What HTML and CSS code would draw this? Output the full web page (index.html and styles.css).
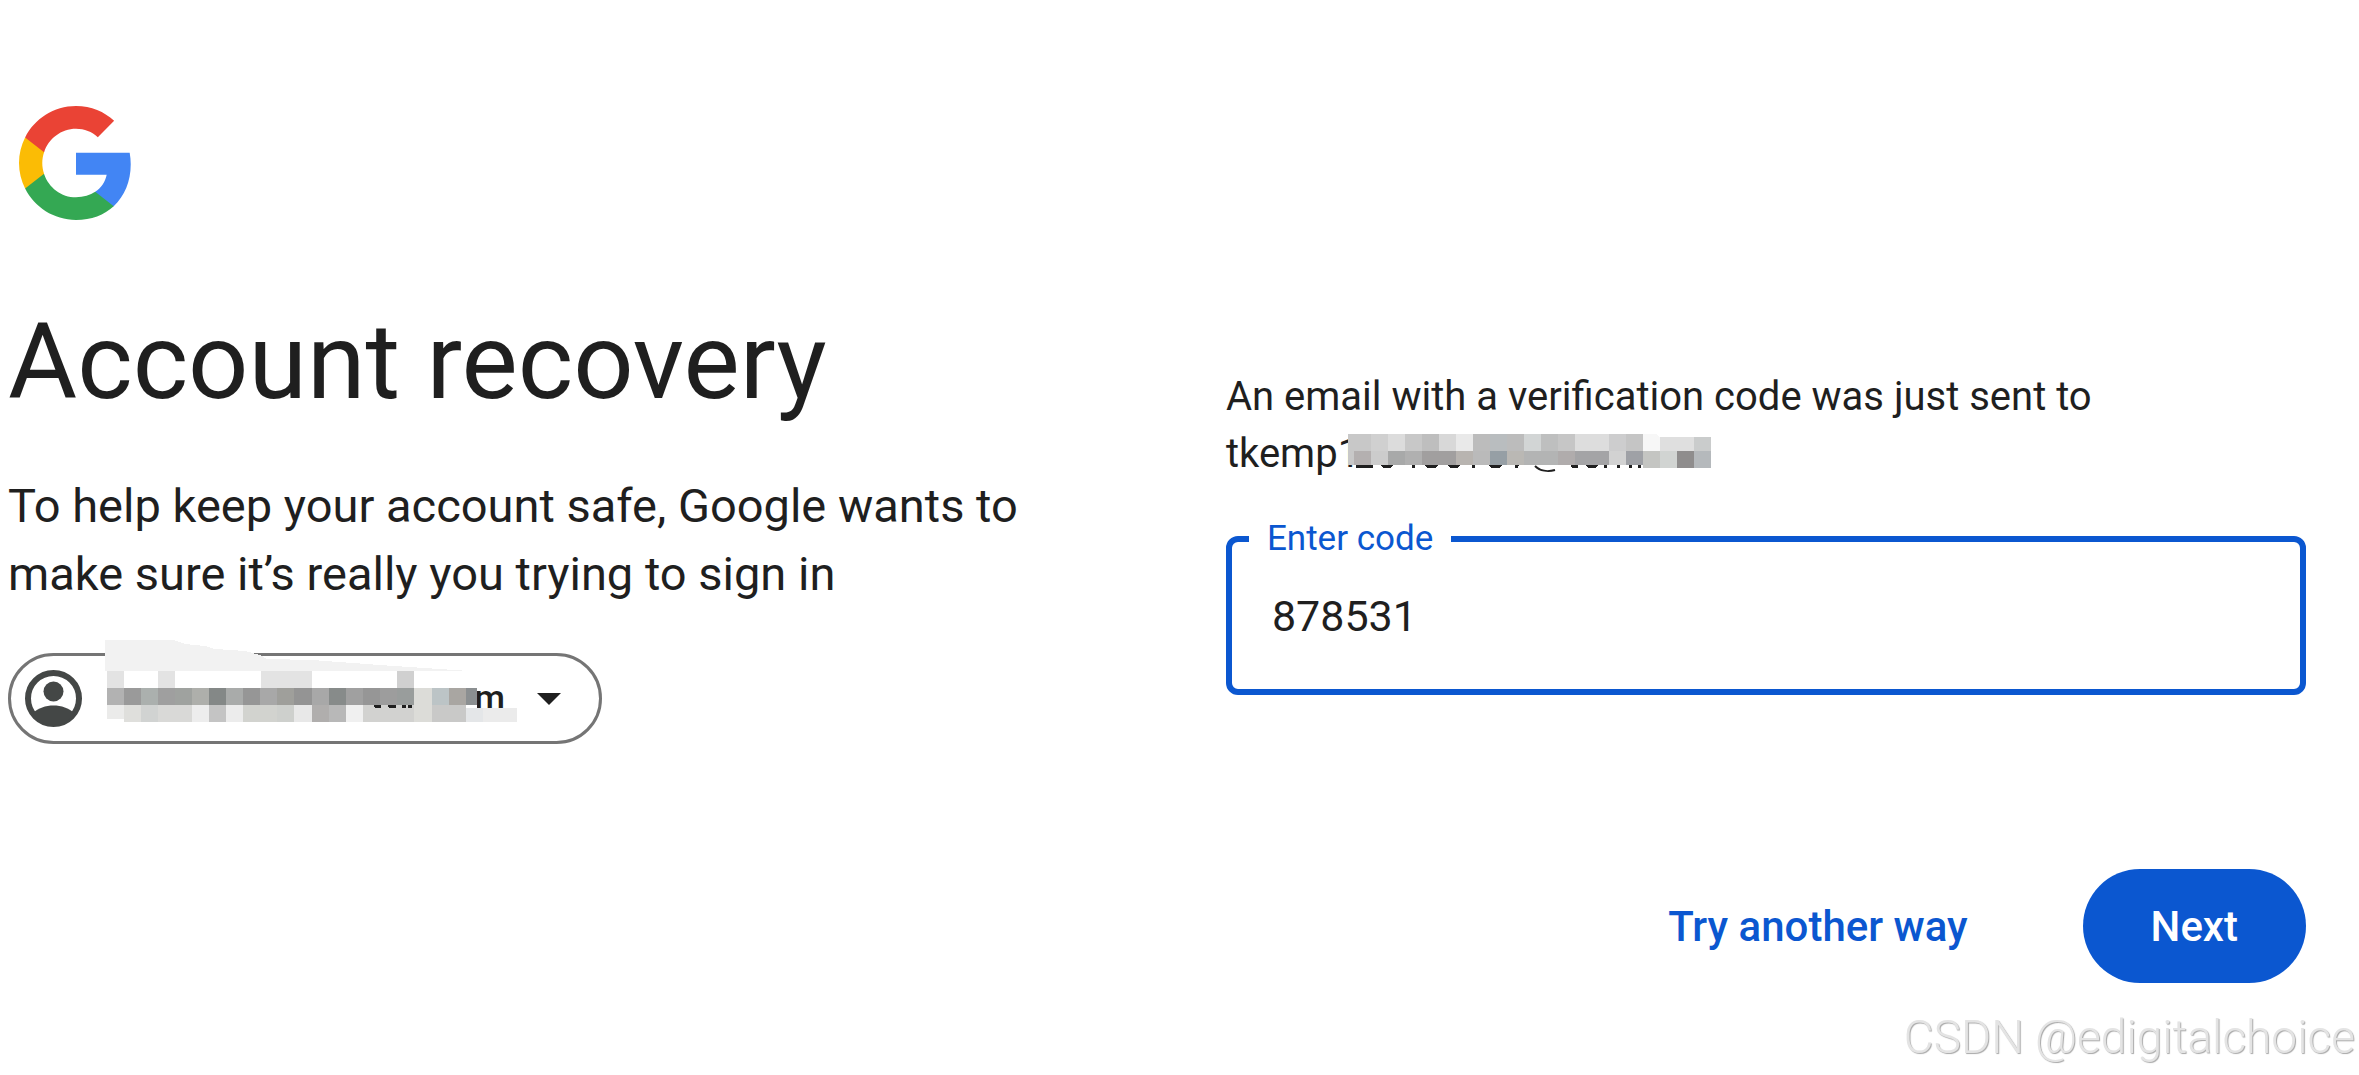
FILE: index.html
```html
<!DOCTYPE html>
<html lang="en">
<head>
<meta charset="utf-8">
<title>Account recovery</title>
<meta name="viewport" content="width=device-width, initial-scale=1">
<link rel="stylesheet" href="styles.css">
</head>
<body>
<main class="page">
  <header class="brand">
    <svg class="logo" viewBox="1 1 22 22" preserveAspectRatio="none" role="img" aria-label="Google">
      <path fill="#4285F4" d="M22.56 12.25c0-.78-.07-1.53-.2-2.25H12v4.26h5.92c-.26 1.37-1.04 2.53-2.21 3.31v2.77h3.57c2.08-1.92 3.28-4.74 3.28-8.09z"/>
      <path fill="#34A853" d="M12 23c2.97 0 5.46-.98 7.28-2.66l-3.57-2.77c-.98.66-2.23 1.06-3.71 1.06-2.86 0-5.29-1.93-6.16-4.53H2.18v2.84C3.99 20.53 7.7 23 12 23z"/>
      <path fill="#FBBC05" d="M5.84 14.09c-.22-.66-.35-1.36-.35-2.09s.13-1.43.35-2.09V7.07H2.18C1.43 8.55 1 10.22 1 12s.43 3.45 1.18 4.93l2.85-2.22.81-.62z"/>
      <path fill="#EA4335" d="M12 5.38c1.62 0 3.06.56 4.21 1.64l3.15-3.15C17.45 2.09 14.97 1 12 1 7.7 1 3.99 3.47 2.18 7.07l3.66 2.84c.87-2.6 3.3-4.53 6.16-4.53z"/>
    </svg>
  </header>
  <div class="columns">
    <section class="intro">
      <h1 class="title">Account recovery</h1>
      <p class="lead">To help keep your account safe, Google wants to<br>make sure it’s really you trying to sign in</p>
      <button class="account" type="button" aria-label="Switch account">
        <svg class="avatar" viewBox="0 0 57 57" aria-hidden="true">
          <circle cx="28.500" cy="28.500" r="25.500" fill="none" stroke="#444746" stroke-width="6"/>
          <circle cx="28.500" cy="21.500" r="10" fill="#444746"/>
          <path fill="#444746" d="M8 43C18 33 39 33 49 43 40 59 17 59 8 43z"/>
        </svg>
        <span class="account-name">m</span>
        <svg class="caret" viewBox="0 0 24 12" aria-hidden="true"><path d="M0 0h24L12 12z" fill="#1f1f1f"/></svg>
        <svg class="account-mask" viewBox="0 0 412 85" shape-rendering="crispEdges" aria-hidden="true">
          <path fill="#f2f2f2" d="M0 2H68L80 6 100 8 110 11 140 13 155 17 162 21 207 22 289 28 365 33H0z"/>
          <path fill="#fff" d="M2 33h370v51H2z"/>
          <path fill="#e3e3e3" d="M2 33h17v17H2zM53 33h17v17H53zM156 33h51v17h-51z"/>
          <path fill="#d0d0d0" d="M292 33h17v17h-17z"/>
          <path fill="#b2b2b2" d="M2 50h17v17H2z"/><path fill="#9a9a9a" d="M19 50h17v17H19z"/>
          <path fill="#abb0ae" d="M36 50h17v17H36z"/><path fill="#9f9f9f" d="M53 50h17v17H53z"/>
          <path fill="#9fa29f" d="M70 50h17v17H70z"/><path fill="#aeafab" d="M87 50h17v17H87z"/>
          <path fill="#848887" d="M104 50h17v17h-17z"/>
          <path fill="#a9abaa" d="M121 50h17v17h-17z"/><path fill="#969696" d="M138 50h17v17h-17z"/>
          <path fill="#a8a8a8" d="M155 50h17v17h-17z"/><path fill="#9f9f9b" d="M172 50h17v17h-17z"/>
          <path fill="#949494" d="M189 50h18v17h-18z"/><path fill="#a8a8a8" d="M207 50h17v17h-17z"/>
          <path fill="#878b8a" d="M224 50h17v17h-17z"/><path fill="#a0a0a0" d="M241 50h17v17h-17z"/>
          <path fill="#969696" d="M258 50h17v17h-17z"/><path fill="#9d9d9d" d="M275 50h17v17h-17z"/>
          <path fill="#999d9c" d="M292 50h17v17h-17z"/><path fill="#dcdcd8" d="M309 50h18v34h-18z"/>
          <path fill="#bcc4c6" d="M327 50h17v17h-17z"/><path fill="#a9a6a2" d="M344 50h17v17h-17z"/>
          <path fill="#8b8f91" d="M361 50h11v17h-11z"/>
          <path fill="#ebebea" d="M2 67h17v14H2z"/><path fill="#dfdfdc" d="M19 67h17v17H19z"/>
          <path fill="#d1d3d2" d="M36 67h17v17H36z"/><path fill="#d9d9d7" d="M53 67h34v17H53z"/>
          <path fill="#ededed" d="M87 67h17v17H87z"/><path fill="#c4c4c4" d="M104 67h17v17h-17z"/>
          <path fill="#ececec" d="M121 67h17v17h-17z"/><path fill="#d2d3cf" d="M138 67h34v17h-34z"/>
          <path fill="#ced0cd" d="M172 67h17v17h-17z"/><path fill="#e8e8e8" d="M189 67h18v17h-18z"/>
          <path fill="#b0aead" d="M207 67h17v17h-17z"/><path fill="#b8b8b8" d="M224 67h17v17h-17z"/>
          <path fill="#f0f0f0" d="M241 67h17v17h-17z"/><path fill="#d2d2d0" d="M258 67h51v17h-51z"/>
          <path fill="#c9c9c8" d="M327 67h34v17h-34z"/><path fill="#e4e6e8" d="M361 70h17v14h-17z"/>
          <path fill="#ebebeb" d="M378 70h34v14h-34z"/>
          <path fill="#1f1f1f" d="M269 67h7v3h-6zM283 67h8v3h-7zM297 67h4v3h-4zM303 67h4v3h-4z"/>
        </svg>
      </button>
    </section>
    <form class="verify" onsubmit="return false">
      <p class="hint">An email with a verification code was just sent to<br>
        <span class="address">tkemp1<svg class="address-mask" viewBox="0 0 364 39" shape-rendering="crispEdges" aria-hidden="true">
          <path fill="#c8c8c8" d="M0 0h295v31H0z"/>
          <path fill="#d0d0d0" d="M23 0h17v17H23z"/><path fill="#dcdcdc" d="M40 0h17v17H40z"/>
          <path fill="#c8c8c8" d="M57 0h17v17H57z"/><path fill="#bebebe" d="M74 0h17v17H74z"/>
          <path fill="#d8d8d8" d="M91 0h17v17H91z"/><path fill="#e9e9e9" d="M108 0h17v17h-17z"/>
          <path fill="#bcbcbc" d="M125 0h51v17h-51z"/><path fill="#b9bdbf" d="M142 0h17v17h-17z"/>
          <path fill="#d2d5d5" d="M176 0h17v17h-17z"/><path fill="#bebfbf" d="M193 0h17v17h-17z"/>
          <path fill="#c6c6c6" d="M210 0h17v17h-17z"/><path fill="#dddddd" d="M227 0h34v17h-34z"/>
          <path fill="#cdcdce" d="M261 0h17v17h-17z"/><path fill="#c5c5c5" d="M278 0h17v17h-17z"/>
          <path fill="#f7f7f7" d="M295 0h13l4 4v13h-17z"/><path fill="#dfdfdf" d="M312 3h34v14h-34z"/>
          <path fill="#cacccc" d="M346 3h17v14h-17z"/>
          <path fill="#b4b0b0" d="M6 17h17v14H6z"/><path fill="#cccccc" d="M23 17h17v14H23z"/>
          <path fill="#a8a9a9" d="M40 17h17v14H40z"/><path fill="#b0b0b0" d="M57 17h17v14H57z"/>
          <path fill="#a19f9f" d="M74 17h34v14H74z"/><path fill="#b8b4b0" d="M108 17h17v14h-17z"/>
          <path fill="#bababa" d="M125 17h17v14h-17z"/><path fill="#969fa5" d="M142 17h17v14h-17z"/>
          <path fill="#bab8b4" d="M159 17h17v14h-17z"/><path fill="#b3b4b4" d="M176 17h34v14h-34z"/>
          <path fill="#b0acac" d="M210 17h17v14h-17z"/><path fill="#a4a4a6" d="M227 17h34v14h-34z"/>
          <path fill="#d2d2d2" d="M261 17h17v14h-17z"/><path fill="#9fa1a6" d="M278 17h17v14h-17z"/>
          <path fill="#c4c5c2" d="M295 17h17v17h-17z"/><path fill="#d1d4d2" d="M312 17h17v17h-17z"/>
          <path fill="#8f8d8d" d="M329 17h17v17h-17z"/><path fill="#b5b9bc" d="M346 17h17v17h-17z"/>
          <path fill="#1f1f1f" d="M8 31h17v3H8zM32 31h13l-3 3h-7zM64 31h3v3h-3zM76 31h14l-3 3h-8zM99 31h13l-3 3h-7zM124 31h3v3h-3zM140 31h14l-3 3h-8zM167 31h4l-1 3h-3zM223 31h7v3h-6zM237 31h13l-3 3h-7zM256 31h3v3h-3zM269 31h3v3h-3zM281 31h3v3h-3zM290 31h3v3h-3z"/>
          <path fill="none" stroke="#1f1f1f" stroke-width="2" shape-rendering="auto" d="M187 32c5 5 13 6 20 4"/>
        </svg></span></p>
      <fieldset class="field">
        <legend class="field-legend"><label for="code">Enter code</label></legend>
        <input class="field-input" id="code" type="text" inputmode="numeric" value="878531">
      </fieldset>
      <div class="actions">
        <a class="link" href="#">Try another way</a>
        <button class="next" type="submit">Next</button>
      </div>
    </form>
  </div>
</main>
<div class="watermark">CSDN @edigitalchoice</div>
</body>
</html>
```
FILE: styles.css
```css
* {
  box-sizing: border-box;
}

body {
  margin: 0;
  background: #fff;
  color: #1f1f1f;
  font-family: Roboto, "Liberation Sans", sans-serif;
}

.page {
  padding: 106px 53px 0 8px;
}

.brand {
  padding-left: 11px;
}

.logo {
  display: block;
  width: 114px;
  height: 114px;
}

.columns {
  display: grid;
  grid-template-columns: 53fr 47fr;
  align-items: start;
  padding-top: 78px;
}

.title {
  margin: 0 0 46px;
  font-size: 106px;
  font-weight: 400;
  line-height: 128px;
}

.lead {
  margin: 0 0 45px;
  font-size: 47px;
  line-height: 68px;
}

.account {
  position: relative;
  display: flex;
  align-items: center;
  width: 594px;
  height: 91px;
  padding: 0 38px 0 14px;
  border: 3px solid #757575;
  border-radius: 46px;
  background: #fff;
  color: #1f1f1f;
  font-family: inherit;
  font-size: 35px;
  font-weight: 500;
}

.avatar {
  width: 57px;
  height: 57px;
}

.account-name {
  margin-left: auto;
}

.caret {
  width: 24px;
  height: 12px;
  margin-left: 32px;
}

.account-mask {
  position: absolute;
  top: -18px;
  left: 94px;
  width: 412px;
  height: 85px;
}

.verify {
  padding-top: 70px;
}

.hint {
  margin: 0 0 37px;
  font-size: 40px;
  line-height: 57px;
}

.address {
  position: relative;
}

.address-mask {
  position: absolute;
  top: 4px;
  left: 122px;
  width: 364px;
  height: 39px;
}

.field {
  min-width: 0;
  margin: 0;
  padding: 0 0 16px;
  border: 6px solid #0b57d0;
  border-radius: 12px;
}

.field-legend {
  margin-left: 17px;
  padding: 0 18px;
  color: #0b57d0;
  font-size: 35px;
  line-height: 40px;
}

.field-input {
  display: block;
  width: 100%;
  height: 114px;
  padding: 0 40px;
  border: 0;
  outline: 0;
  background: transparent;
  color: #1f1f1f;
  font-family: inherit;
  font-size: 43px;
}

.actions {
  display: flex;
  align-items: center;
  justify-content: flex-end;
  gap: 115px;
  margin-top: 174px;
}

.link {
  color: #0b57d0;
  font-size: 42px;
  font-weight: 500;
  text-decoration: none;
}

.next {
  height: 114px;
  padding: 0 68px;
  border: 0;
  border-radius: 57px;
  background: #0b57d0;
  color: #fff;
  font-family: inherit;
  font-size: 42px;
  font-weight: 500;
}

.watermark {
  position: fixed;
  right: 4px;
  bottom: 12px;
  color: #e4e4e4;
  font-size: 46px;
  font-weight: 300;
  line-height: 52px;
  text-shadow: 1px 1px 1px #a8a8a8;
}
```
